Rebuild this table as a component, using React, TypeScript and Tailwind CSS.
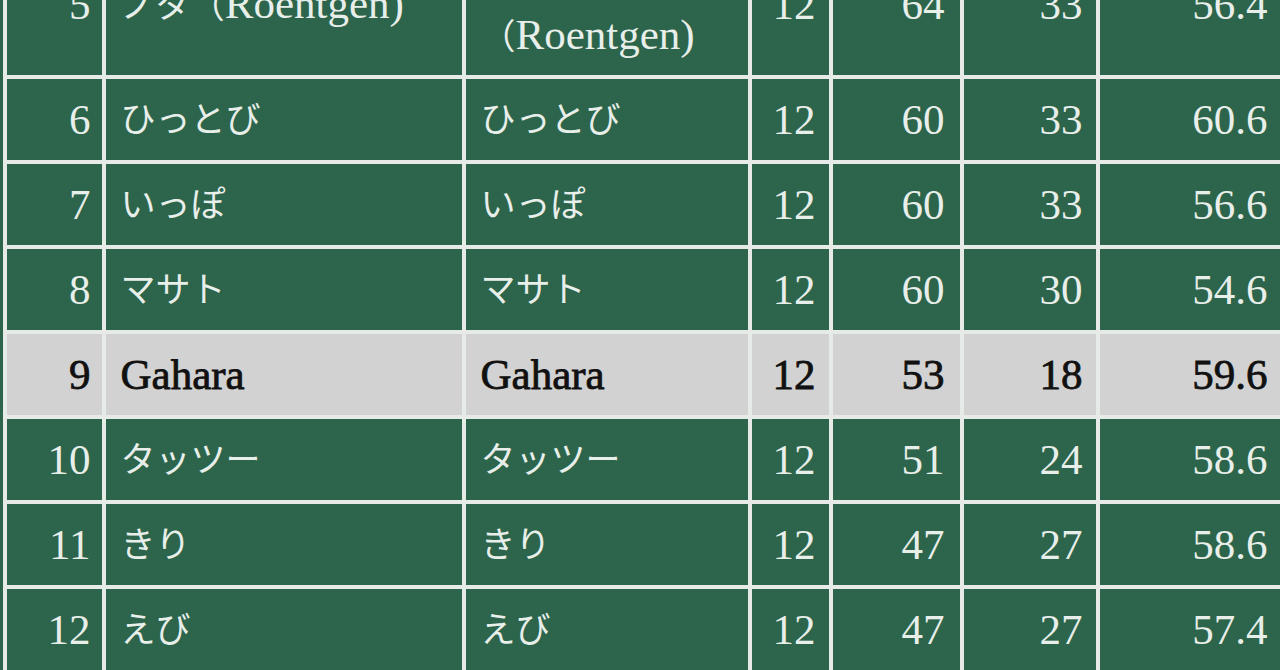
import React from 'react';

type Row = {
  rank: number;
  name: React.ReactNode;
  name2: React.ReactNode;
  games: number;
  pts: number;
  wins: number;
  avg: string;
  highlight?: boolean;
  tall?: boolean;
};

const jp = (s: string) => <span className="text-[35px]">{s}</span>;

const roentgen = (
  <>
    {jp('ノタ（')}Roentgen)
  </>
);

const rows: Row[] = [
  { rank: 5, name: roentgen, name2: roentgen, games: 12, pts: 64, wins: 33, avg: '56.4', tall: true },
  { rank: 6, name: jp('ひっとび'), name2: jp('ひっとび'), games: 12, pts: 60, wins: 33, avg: '60.6' },
  { rank: 7, name: jp('いっぽ'), name2: jp('いっぽ'), games: 12, pts: 60, wins: 33, avg: '56.6' },
  { rank: 8, name: jp('マサト'), name2: jp('マサト'), games: 12, pts: 60, wins: 30, avg: '54.6' },
  { rank: 9, name: 'Gahara', name2: 'Gahara', games: 12, pts: 53, wins: 18, avg: '59.6', highlight: true },
  { rank: 10, name: jp('タッツー'), name2: jp('タッツー'), games: 12, pts: 51, wins: 24, avg: '58.6' },
  { rank: 11, name: jp('きり'), name2: jp('きり'), games: 12, pts: 47, wins: 27, avg: '58.6' },
  { rank: 12, name: jp('えび'), name2: jp('えび'), games: 12, pts: 47, wins: 27, avg: '57.4' },
];

export default function App() {
  return (
    <div
      className="w-[1280px] h-[670px] overflow-hidden bg-[#2c654b] pl-[3px]"
      style={{ fontFamily: '"Liberation Serif", "Noto Sans CJK JP", serif' }}
    >
      <div className="-mt-[65px] w-[1400px] bg-[#e7ebe8] pl-[4px] grid grid-cols-[94.5px_356px_282px_77px_127px_132px_181px_1fr] gap-[4px] text-[43px] leading-[60px]">
        {rows.map(r => {
          const cell = r.highlight
            ? 'bg-[#d2d2d2] text-[#111111] [-webkit-text-stroke:0.8px_#111111]'
            : 'bg-[#2c654b] text-[#e8eee9]';
          const h = r.tall ? 'h-[140px]' : 'h-[81px]';
          return (
            <React.Fragment key={r.rank}>
              <div className={`${cell} ${h} flex items-center justify-end pr-[11px]`}>{r.rank}</div>
              <div className={`${cell} ${h} flex items-center pl-[15px] pr-[15px]`}>
                <div>{r.name}</div>
              </div>
              <div className={`${cell} ${h} flex items-center pl-[15px] pr-[15px]`}>
                <div>{r.name2}</div>
              </div>
              <div className={`${cell} ${h} flex items-center justify-end pr-[13px]`}>{r.games}</div>
              <div className={`${cell} ${h} flex items-center justify-end pr-[15px]`}>{r.pts}</div>
              <div className={`${cell} ${h} flex items-center justify-end pr-[13px]`}>{r.wins}</div>
              <div className={`${cell} ${h} flex items-center justify-end pr-[13px]`}>{r.avg}</div>
              <div className={`${cell} ${h}`} />
            </React.Fragment>
          );
        })}
      </div>
    </div>
  );
}
